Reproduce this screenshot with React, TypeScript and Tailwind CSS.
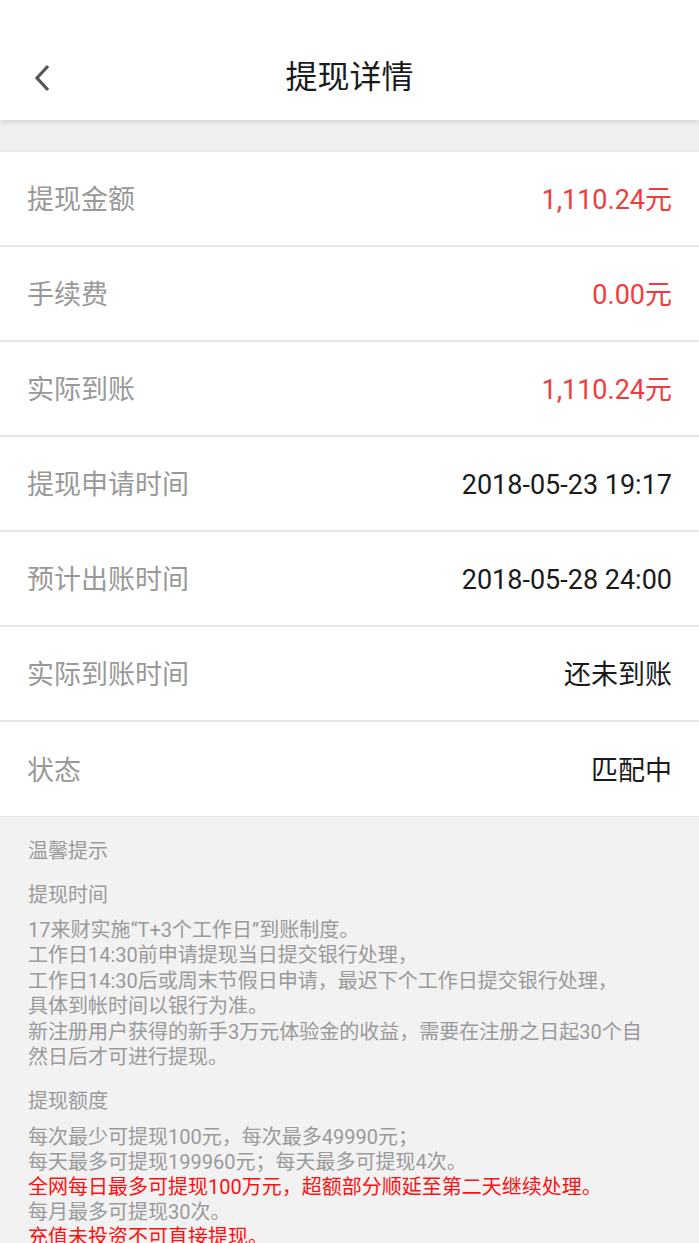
import React from "react";

const rows = [
  { label: "提现金额", value: "1,110.24元", red: true },
  { label: "手续费", value: "0.00元", red: true },
  { label: "实际到账", value: "1,110.24元", red: true },
  { label: "提现申请时间", value: "2018-05-23 19:17" },
  { label: "预计出账时间", value: "2018-05-28 24:00" },
  { label: "实际到账时间", value: "还未到账" },
  { label: "状态", value: "匹配中" },
];

const timeLines = [
  "17来财实施“T+3个工作日”到账制度。",
  "工作日14:30前申请提现当日提交银行处理，",
  "工作日14:30后或周末节假日申请，最迟下个工作日提交银行处理，",
  "具体到帐时间以银行为准。",
  "新注册用户获得的新手3万元体验金的收益，需要在注册之日起30个自",
  "然日后才可进行提现。",
];

const limitLines = [
  { text: "每次最少可提现100元，每次最多49990元；" },
  { text: "每天最多可提现199960元；每天最多可提现4次。" },
  { text: "全网每日最多可提现100万元，超额部分顺延至第二天继续处理。", red: true },
  { text: "每月最多可提现30次。" },
  { text: "充值未投资不可直接提现。", red: true },
];

export default function App() {
  return (
    <div
      className="w-[699px] h-[1243px] overflow-hidden bg-[#f2f2f2]"
      style={{ fontFamily: 'Roboto, "Noto Sans CJK SC", sans-serif' }}
    >
      {/* header */}
      <div className="relative z-10 h-[120px] bg-white pt-[43px] shadow-[0_2px_5px_rgba(0,0,0,0.12)]">
        <div className="w-full relative flex items-center justify-center h-[68px]">
          <svg className="absolute left-[32px] top-[21px]" width="20" height="28" viewBox="0 0 20 28">
            <path d="M16 2 L5 14 L16 26" fill="none" stroke="#555" strokeWidth="3.2" />
          </svg>
          <span className="text-[32px] text-[#1a1a1a] leading-none">提现详情</span>
        </div>
      </div>

      <div className="h-[30px] bg-[#f0f0f0]" />

      {/* detail rows */}
      <div className="bg-white border-t-2 border-[#e8e8e8]">
        {rows.map((r) => (
          <div key={r.label} className="h-[95px] pt-[4px] flex items-center justify-between px-[27px] border-b-2 border-[#e8e8e8] last:border-b-[1px]">
            <span className="text-[27px] text-[#999999]">{r.label}</span>
            <span className={`text-[27px] ${r.red ? "text-[#f03c3c]" : "text-[#1a1a1a]"}`}>{r.value}</span>
          </div>
        ))}
      </div>

      {/* tips */}
      <div className="px-[28px] pt-[22px] text-[20px] text-[#9a9a9a] leading-[25px] whitespace-nowrap">
        <div>温馨提示</div>
        <div className="mt-[19px]">提现时间</div>
        <div className="mt-[10px] leading-[25.4px]">
          {timeLines.map((t) => (
            <div key={t}>{t}</div>
          ))}
        </div>
        <div className="mt-[19px]">提现额度</div>
        <div className="mt-[11px]">
          {limitLines.map((l) => (
            <div key={l.text} className={l.red ? "text-[#ff1010]" : ""}>{l.text}</div>
          ))}
        </div>
      </div>
    </div>
  );
}
